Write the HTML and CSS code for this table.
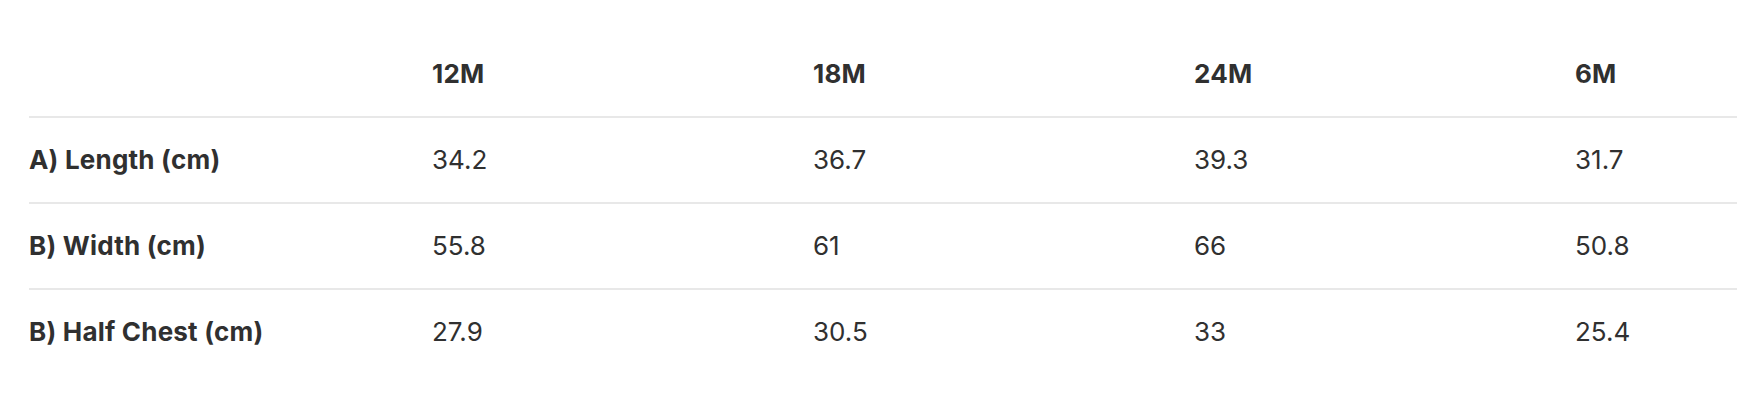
FILE: index.html
```html
<!DOCTYPE html>
<html lang="en">
<head>
<meta charset="utf-8">
<title>Size chart</title>
<link rel="stylesheet" href="styles.css">
</head>
<body>
<div class="chart">
  <table class="size-table">
    <colgroup>
      <col class="col-label">
      <col class="col-size">
      <col class="col-size">
      <col class="col-size">
      <col class="col-size">
    </colgroup>
    <thead>
      <tr>
        <th></th>
        <th>12M</th>
        <th>18M</th>
        <th>24M</th>
        <th>6M</th>
      </tr>
    </thead>
    <tbody>
      <tr>
        <th>A) Length (cm)</th>
        <td>34.2</td>
        <td>36.7</td>
        <td>39.3</td>
        <td>31.7</td>
      </tr>
      <tr>
        <th>B) Width (cm)</th>
        <td>55.8</td>
        <td>61</td>
        <td>66</td>
        <td>50.8</td>
      </tr>
      <tr>
        <th>B) Half Chest (cm)</th>
        <td>27.9</td>
        <td>30.5</td>
        <td>33</td>
        <td>25.4</td>
      </tr>
    </tbody>
  </table>
</div>
</body>
</html>
```
FILE: styles.css
```css
html, body {
  margin: 0;
  padding: 0;
  background: #ffffff;
}

body {
  overflow: hidden;
  font-family: "Inter", "Liberation Sans", sans-serif;
  color: #303030;
}

.chart {
  padding: 32px 0 0 29px;
  overflow: hidden;
}

.size-table {
  border-collapse: collapse;
  table-layout: fixed;
  width: 1927px;
}

.col-label {
  width: 403px;
}

.col-size {
  width: 381px;
}

.size-table th,
.size-table td {
  height: 84px;
  padding: 0;
  text-align: left;
  vertical-align: middle;
  font-size: 26px;
  line-height: 30px;
}

.size-table th {
  font-weight: 700;
  letter-spacing: 0.2px;
}

.size-table td {
  font-weight: 400;
}

.size-table tr {
  border-bottom: 2px solid #e8e8e8;
}

.size-table tbody tr:last-child {
  border-bottom: none;
}
```
